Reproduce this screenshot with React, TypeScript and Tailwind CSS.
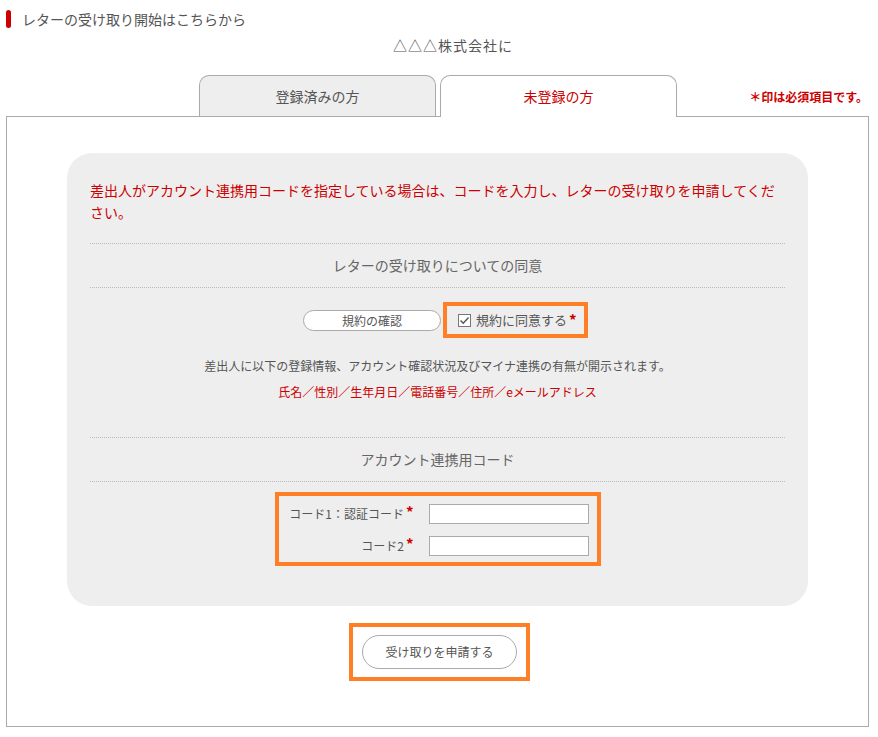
import React from "react";

const font = { fontFamily: '"Noto Sans CJK JP", "Noto Sans", sans-serif' };

function Req() {
  return <span className="text-[#cc0000] font-bold text-[15px] leading-none relative top-[-1px] ml-[2px]">*</span>;
}

export default function App() {
  return (
    <div style={font} className="w-[878px] h-[737px] bg-white text-[#555] relative">
      {/* title */}
      <div className="flex items-center pl-[6px] pt-[10px] h-[28px]">
        <span className="w-[5px] h-[18px] rounded-full bg-[#cc0000]" />
        <span className="ml-[11px] text-[14px] leading-[18px] text-[#555]">レターの受け取り開始はこちらから</span>
      </div>
      {/* company */}
      <div className="mt-[7px] pl-[28px] text-center text-[14px] leading-[20px] text-[#555] tracking-[1px]">△△△株式会社に</div>
      {/* tabs */}
      <div className="mt-[20px] flex items-end pl-[199px] pr-[10px] h-[41px] relative z-10">
        <div className="w-[237px] h-[41px] bg-[#eee] border border-b-0 border-[#aaa] rounded-t-[10px] flex items-center justify-center text-[14px] text-[#555]">
          登録済みの方
        </div>
        <div className="ml-[4px] w-[237px] h-[42px] mb-[-1px] bg-white border border-b-0 border-[#aaa] rounded-t-[10px] flex items-center justify-center text-[14px] text-[#cc0000]">
          未登録の方
        </div>
        <div className="flex-1 self-stretch flex items-center justify-end pt-[2px] text-[12px] font-bold text-[#cc0000]">
          ＊印は必須項目です。
        </div>
      </div>
      {/* main box */}
      <div className="ml-[6px] mr-[9px] h-[611px] border border-[#aaa] pt-[36px]">
        <div className="mx-[60px] h-[453px] bg-[#eee] rounded-[25px] px-[23px] pt-[26px]">
          <p className="text-[14px] leading-[22px] text-[#cc0000]">
            <span className="whitespace-nowrap">差出人がアカウント連携用コードを指定している場合は、コードを入力し、レターの受け取りを申請してくだ</span>
            <br />さい。
          </p>
          <div className="mt-[20px] border-t border-dotted border-[#bbb]" />
          <div className="h-[43px] flex items-center justify-center text-[14px] text-[#666]">レターの受け取りについての同意</div>
          <div className="border-t border-dotted border-[#bbb]" />
          <div className="mt-[14px] flex items-center justify-center pl-[16px]">
            <button className="w-[138px] h-[21px] bg-white border border-[#aaa] rounded-full text-[12px] leading-[19px] text-[#555]">規約の確認</button>
            <div className="ml-[2px] w-[145px] h-[36px] border-[4px] border-[#ff7f27] flex items-center pl-[11px]">
              <svg width="13" height="13" viewBox="0 0 13 13" className="mr-[5px]">
                <rect x="0.5" y="0.5" width="12" height="12" fill="white" stroke="#777" />
                <path d="M2.5 6.5 L5.2 9.2 L10.5 3.5" fill="none" stroke="#555" strokeWidth="1.4" />
              </svg>
              <span className="text-[13px] text-[#555]">規約に同意する</span>
              <Req />
            </div>
          </div>
          <p className="mt-[19px] text-center text-[12px] leading-[18px] text-[#555]">差出人に以下の登録情報、アカウント確認状況及びマイナ連携の有無が開示されます。</p>
          <p className="mt-[8px] text-center text-[12px] leading-[18px] text-[#cc0000]">氏名／性別／生年月日／電話番号／住所／eメールアドレス</p>
          <div className="mt-[36px] border-t border-dotted border-[#bbb]" />
          <div className="h-[43px] flex items-center justify-center text-[14px] text-[#666]">アカウント連携用コード</div>
          <div className="border-t border-dotted border-[#bbb]" />
          <div className="mt-[10px] flex justify-center">
            <div className="w-[326px] border-[4px] border-[#ff7f27] pt-[8px] pb-[6px] pl-[8px] pr-[8px] flex flex-col gap-[12px]">
              <div className="flex items-center">
                <div className="w-[127px] text-right text-[12px] text-[#555]">コード1：認証コード<Req /></div>
                <input className="ml-[15px] w-[160px] h-[20px] bg-white border border-[#aaa] outline-none" />
              </div>
              <div className="flex items-center">
                <div className="w-[127px] text-right text-[12px] text-[#555]">コード2<Req /></div>
                <input className="ml-[15px] w-[160px] h-[20px] bg-white border border-[#aaa] outline-none" />
              </div>
            </div>
          </div>
        </div>
        <div className="mt-[17px] flex justify-center pl-[4px]">
          <div className="w-[181px] h-[58px] border-[4px] border-[#ff7f27] flex items-center justify-center">
            <button className="w-[155px] h-[34px] bg-white border border-[#aaa] rounded-full text-[12px] text-[#555]">受け取りを申請する</button>
          </div>
        </div>
      </div>
    </div>
  );
}
